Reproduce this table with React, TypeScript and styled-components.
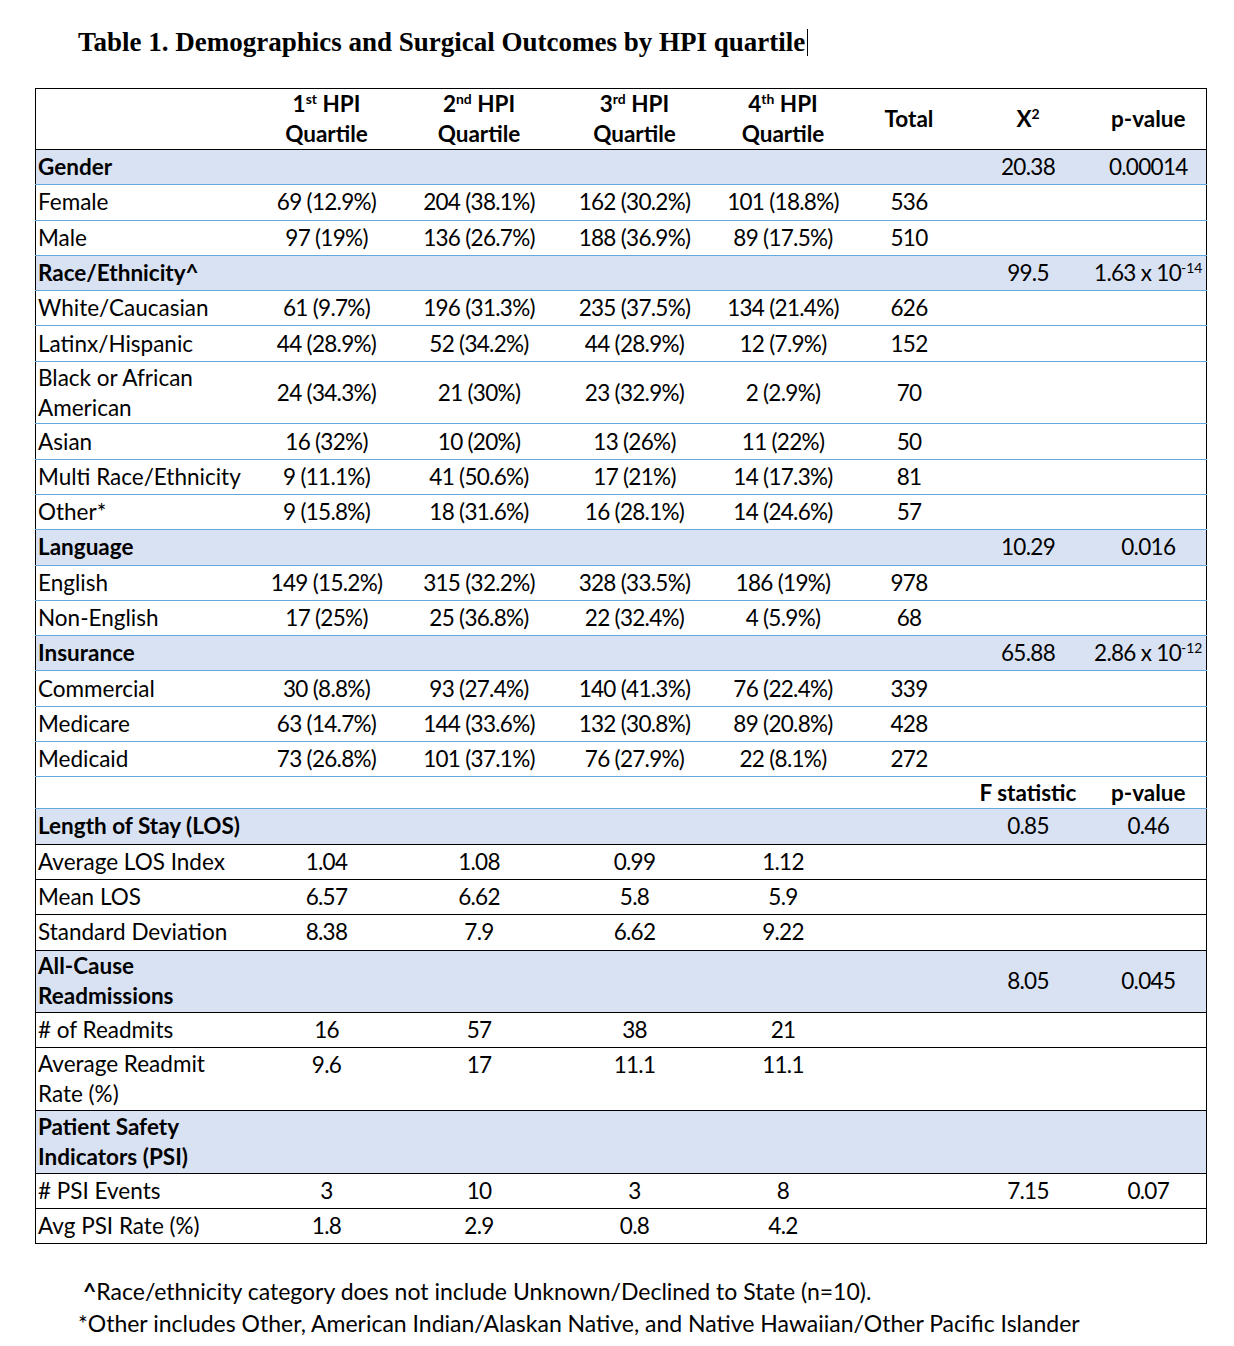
import React from "react";
import styled, { createGlobalStyle } from "styled-components";

const GlobalStyle = createGlobalStyle`
  html, body { margin: 0; padding: 0; background: #ffffff; }
  body { font-family: Lato, "Open Sans", sans-serif; color: #000; }
`;

const BLUE = "#64A8DC";
const FILL = "#D9E2F3";

const Page = styled.main`
  width: 1234px;
  min-height: 1346px;
  box-sizing: border-box;
  padding: 28px 0 0 35px;
  background: #fff;
`;

const Title = styled.h1`
  margin: 0 0 32px 43px;
  font-family: "Liberation Serif", "Times New Roman", serif;
  font-weight: 700;
  font-size: 27px;
  line-height: 28px;
  display: flex;
  align-items: center;
`;

const Caret = styled.span`
  display: inline-block;
  width: 0;
  height: 27px;
  border-left: 1.5px solid #000;
  margin-left: 2px;
`;

const Table = styled.table`
  width: 1172px;
  border: 1px solid #000;
  border-collapse: collapse;
  table-layout: fixed;
  font-family: Lato, "Open Sans", sans-serif;
  font-size: 22.5px;
  line-height: 30px;
`;

const HeadCell = styled.th<{ $label?: boolean }>`
  font-weight: 700;
  text-align: ${(p) => (p.$label ? "left" : "center")};
  vertical-align: middle;
  padding: 0 2px;
  height: 60px;
  border-bottom: 1px solid #000;
  line-height: 30px;
`;

const Row = styled.tr<{ $shaded?: boolean }>`
  background: ${(p) => (p.$shaded ? FILL : "transparent")};
`;

type Size = "single" | "double" | "short";
const heights: Record<Size, number> = { single: 34.3, double: 61.6, short: 31 };

const Cell = styled.td<{
  $edge: "blue" | "black";
  $size: Size;
  $label?: boolean;
  $bold?: boolean;
  $top?: boolean;
}>`
  padding: ${(p) => (p.$top ? "2px 2px 0 2px" : "0 2px")};
  height: ${(p) => heights[p.$size] - (p.$top ? 2 : 0)}px;
  border-bottom: 1px solid ${(p) => (p.$edge === "blue" ? BLUE : "#000")};
  text-align: ${(p) => (p.$label ? "left" : "center")};
  vertical-align: ${(p) => (p.$top ? "top" : "middle")};
  font-weight: ${(p) => (p.$bold ? 700 : 400)};
  white-space: nowrap;
  letter-spacing: ${(p) => (p.$label || p.$bold ? "0" : "-0.7px")};
`;

const Sup = styled.sup`
  font-size: 0.62em;
  line-height: 0;
  vertical-align: 0.55em;
  letter-spacing: 0;
`;

const Notes = styled.div`
  margin: 31px 0 0 43px;
  font-family: Lato, "Open Sans", sans-serif;
  font-size: 23px;
  line-height: 32px;
`;

const Note = styled.p<{ $indent?: number }>`
  margin: 0;
  padding-left: ${(p) => p.$indent ?? 0}px;
`;

const Caretmark = styled.b`
  font-weight: 700;
`;

type RowData = {
  label: React.ReactNode;
  cells: React.ReactNode[];
  section?: boolean;
  boldCells?: boolean;
  edge: "blue" | "black";
  size?: Size;
  top?: boolean;
};

const exp = (base: string, e: string) => (
  <>
    {base}
    <Sup>{e}</Sup>
  </>
);

const rows: RowData[] = [
  { label: "Gender", section: true, cells: ["", "", "", "", "", "20.38", "0.00014"], edge: "blue" },
  { label: "Female", cells: ["69 (12.9%)", "204 (38.1%)", "162 (30.2%)", "101 (18.8%)", "536", "", ""], edge: "blue" },
  { label: "Male", cells: ["97 (19%)", "136 (26.7%)", "188 (36.9%)", "89 (17.5%)", "510", "", ""], edge: "blue" },
  { label: "Race/Ethnicity^", section: true, cells: ["", "", "", "", "", "99.5", exp("1.63 x 10", "-14")], edge: "blue" },
  { label: "White/Caucasian", cells: ["61 (9.7%)", "196 (31.3%)", "235 (37.5%)", "134 (21.4%)", "626", "", ""], edge: "blue" },
  { label: "Latinx/Hispanic", cells: ["44 (28.9%)", "52 (34.2%)", "44 (28.9%)", "12 (7.9%)", "152", "", ""], edge: "blue" },
  { label: <>Black or African<br />American</>, size: "double", cells: ["24 (34.3%)", "21 (30%)", "23 (32.9%)", "2 (2.9%)", "70", "", ""], edge: "blue" },
  { label: "Asian", cells: ["16 (32%)", "10 (20%)", "13 (26%)", "11 (22%)", "50", "", ""], edge: "blue" },
  { label: "Multi Race/Ethnicity", cells: ["9 (11.1%)", "41 (50.6%)", "17 (21%)", "14 (17.3%)", "81", "", ""], edge: "blue" },
  { label: "Other*", cells: ["9 (15.8%)", "18 (31.6%)", "16 (28.1%)", "14 (24.6%)", "57", "", ""], edge: "blue" },
  { label: "Language", section: true, cells: ["", "", "", "", "", "10.29", "0.016"], edge: "blue" },
  { label: "English", cells: ["149 (15.2%)", "315 (32.2%)", "328 (33.5%)", "186 (19%)", "978", "", ""], edge: "blue" },
  { label: "Non-English", cells: ["17 (25%)", "25 (36.8%)", "22 (32.4%)", "4 (5.9%)", "68", "", ""], edge: "blue" },
  { label: "Insurance", section: true, cells: ["", "", "", "", "", "65.88", exp("2.86 x 10", "-12")], edge: "blue" },
  { label: "Commercial", cells: ["30 (8.8%)", "93 (27.4%)", "140 (41.3%)", "76 (22.4%)", "339", "", ""], edge: "blue" },
  { label: "Medicare", cells: ["63 (14.7%)", "144 (33.6%)", "132 (30.8%)", "89 (20.8%)", "428", "", ""], edge: "blue" },
  { label: "Medicaid", cells: ["73 (26.8%)", "101 (37.1%)", "76 (27.9%)", "22 (8.1%)", "272", "", ""], edge: "blue" },
  { label: "", boldCells: true, size: "short", cells: ["", "", "", "", "", "F statistic", "p-value"], edge: "blue" },
  { label: "Length of Stay (LOS)", section: true, cells: ["", "", "", "", "", "0.85", "0.46"], edge: "black" },
  { label: "Average LOS Index", cells: ["1.04", "1.08", "0.99", "1.12", "", "", ""], edge: "black" },
  { label: "Mean LOS", cells: ["6.57", "6.62", "5.8", "5.9", "", "", ""], edge: "black" },
  { label: "Standard Deviation", cells: ["8.38", "7.9", "6.62", "9.22", "", "", ""], edge: "black" },
  { label: <>All-Cause<br />Readmissions</>, section: true, size: "double", cells: ["", "", "", "", "", "8.05", "0.045"], edge: "black" },
  { label: "# of Readmits", cells: ["16", "57", "38", "21", "", "", ""], edge: "black" },
  { label: <>Average Readmit<br />Rate (%)</>, size: "double", top: true, cells: ["9.6", "17", "11.1", "11.1", "", "", ""], edge: "black" },
  { label: <>Patient Safety<br />Indicators (PSI)</>, section: true, size: "double", cells: ["", "", "", "", "", "", ""], edge: "black" },
  { label: "# PSI Events", cells: ["3", "10", "3", "8", "", "7.15", "0.07"], edge: "black" },
  { label: "Avg PSI Rate (%)", cells: ["1.8", "2.9", "0.8", "4.2", "", "", ""], edge: "black" },
];

const widths = [215, 152, 153, 158, 139, 113, 125, 116];

const headers: React.ReactNode[] = [
  <>1<Sup>st</Sup> HPI<br />Quartile</>,
  <>2<Sup>nd</Sup> HPI<br />Quartile</>,
  <>3<Sup>rd</Sup> HPI<br />Quartile</>,
  <>4<Sup>th</Sup> HPI<br />Quartile</>,
  "Total",
  <>X<Sup>2</Sup></>,
  "p-value",
];

export default function App() {
  return (
    <>
      <GlobalStyle />
      <Page>
        <Title>
          Table 1. Demographics and Surgical Outcomes by HPI quartile
          <Caret />
        </Title>
        <Table>
          <colgroup>
            {widths.map((w, i) => (
              <col key={i} style={{ width: w }} />
            ))}
          </colgroup>
          <thead>
            <tr>
              <HeadCell $label />
              {headers.map((h, i) => (
                <HeadCell key={i}>{h}</HeadCell>
              ))}
            </tr>
          </thead>
          <tbody>
            {rows.map((r, i) => {
              const size = r.size ?? "single";
              return (
                <Row key={i} $shaded={r.section}>
                  <Cell $edge={r.edge} $size={size} $label $bold={r.section}>
                    {r.label}
                  </Cell>
                  {r.cells.map((c, j) => (
                    <Cell key={j} $edge={r.edge} $size={size} $bold={r.boldCells} $top={r.top}>
                      {c}
                    </Cell>
                  ))}
                </Row>
              );
            })}
          </tbody>
        </Table>
        <Notes>
          <Note $indent={5}>
            <Caretmark>^</Caretmark>Race/ethnicity category does not include Unknown/Declined to State (n=10).
          </Note>
          <Note>
            *Other includes Other, American Indian/Alaskan Native, and Native Hawaiian/Other Pacific Islander
          </Note>
        </Notes>
      </Page>
    </>
  );
}
